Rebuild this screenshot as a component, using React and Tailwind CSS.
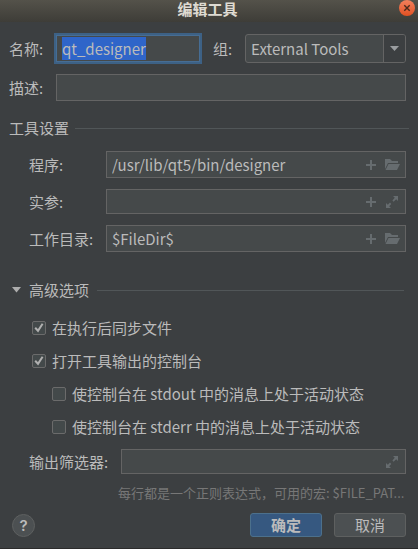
import { useEffect, useRef } from "react";

const field =
  "flex items-center border border-[#646464] bg-[#45494a] focus-within:border-[#466d94] focus-within:outline-2 focus-within:outline-[#3d6185]";
const fieldInput =
  "min-w-0 flex-1 bg-transparent px-[5px] leading-[23px] text-[#bbbbbb] outline-none selection:bg-[#2f65ca]/99 selection:text-[#bbbbbb]";
const iconButton = "flex h-4 w-4 shrink-0 items-center justify-center text-[#666c6f]";

function PlusIcon() {
  return (
    <svg width="16" height="16" viewBox="0 0 16 16" fill="currentColor" aria-hidden="true">
      <path d="M7 3h2v4h4v2H9v4H7V9H3V7h4z" />
    </svg>
  );
}

function FolderIcon() {
  return (
    <svg width="16" height="16" viewBox="0 0 16 16" fill="currentColor" aria-hidden="true">
      <path d="M1 12V2h5l2 2h6v2H4z" />
      <path d="M4.5 7H16l-3 6H1.5z" />
    </svg>
  );
}

function ExpandIcon() {
  return (
    <svg width="16" height="16" viewBox="0 0 16 16" fill="currentColor" aria-hidden="true">
      <path d="M9 2h5v5l-1.8-1.8-2.6 2.6-1.2-1.2 2.4-2.8z" />
      <path d="M2 9l1.8 1.8 2.2-2.2 1.3 1.3-2.1 2.3L7 14H2z" />
    </svg>
  );
}

function Heading({ children }) {
  return (
    <>
      <h2 className="leading-[22px]">{children}</h2>
      <div className="h-px flex-1 bg-[#515658]" />
    </>
  );
}

function ToolRow({ id, label, value, height, expand }) {
  return (
    <div className="flex items-center">
      <label htmlFor={id} className="w-[77px] shrink-0">
        {label}
      </label>
      <div className={`${field} ${height} min-w-0 flex-1 pr-[5px]`}>
        <input id={id} defaultValue={value} className={fieldInput} />
        <button type="button" aria-label="+" className={`${iconButton} mr-[5px]`}>
          <PlusIcon />
        </button>
        <button type="button" aria-label="..." className={iconButton}>
          {expand ? <ExpandIcon /> : <FolderIcon />}
        </button>
      </div>
    </div>
  );
}

function Check({ label, checked }) {
  return (
    <label className="flex h-[22px] items-center gap-[6px]">
      <span className="grid h-[14px] w-[14px] shrink-0">
        <input
          type="checkbox"
          defaultChecked={checked}
          className="peer col-start-1 row-start-1 h-[14px] w-[14px] appearance-none rounded-[2px] border border-[#6b6b6b] bg-[#43494a]"
        />
        <svg
          viewBox="0 0 14 14"
          className="pointer-events-none col-start-1 row-start-1 hidden h-[14px] w-[14px] peer-checked:block"
          fill="none"
          stroke="#b0b0b0"
          strokeWidth="2"
          aria-hidden="true"
        >
          <path d="M3.2 6.8L6 9.8L10.6 2.8" />
        </svg>
      </span>
      <span>{label}</span>
    </label>
  );
}

export default function App() {
  const nameRef = useRef(null);

  useEffect(() => {
    nameRef.current.focus();
    nameRef.current.select();
  }, []);

  return (
    <div className="flex min-h-screen flex-col border-b border-[#2b2b2b] bg-[#3c3f41] font-['Noto_Sans_CJK_SC',sans-serif] text-[15px] leading-[22px] text-[#bbbbbb]">
      <header className="grid h-[22px] grid-cols-[1fr_auto_1fr] items-center bg-linear-to-b from-[#54524a] to-[#3e3d38] pr-[3px]">
        <h1 className="col-start-2 h-[22px] font-bold leading-[18px] text-[#dfdbd2]">编辑工具</h1>
        <button
          type="button"
          aria-label="关闭"
          className="mb-[6px] flex h-4 w-4 items-center justify-center justify-self-end rounded-full bg-linear-to-b from-[#f2805c] to-[#e2501f]"
        >
          <svg width="16" height="16" viewBox="0 0 16 16" fill="none" stroke="#4a2a1c" strokeWidth="1.4" aria-hidden="true">
            <path d="M5.3 5.3l5.4 5.4M10.7 5.3l-5.4 5.4" />
          </svg>
        </button>
      </header>

      <form className="flex flex-1 flex-col" onSubmit={(e) => e.preventDefault()}>
        <div className="mt-3 flex items-center pl-[9px] pr-3">
          <label htmlFor="name" className="w-[47px] shrink-0">
            名称:
          </label>
          <div className={`${field} h-[27px] min-w-0 flex-[144]`}>
            <input id="name" ref={nameRef} defaultValue="qt_designer" className={fieldInput} />
          </div>
          <label htmlFor="group" className="ml-[13px] w-8 shrink-0">
            组:
          </label>
          <div className="grid h-[29px] min-w-0 flex-[161] grid-cols-[1fr_22px] overflow-hidden rounded-[3px] border border-[#646464] bg-[#45494a]">
            <select
              id="group"
              className="col-span-2 col-start-1 row-start-1 min-w-0 appearance-none bg-transparent pl-[5px] pr-6 outline-none"
            >
              <option>External Tools</option>
            </select>
            <span className="pointer-events-none col-start-2 row-start-1 flex items-center justify-center border-l border-[#646464] bg-[#3c3f41]">
              <svg width="9" height="5" viewBox="0 0 9 5" fill="#9a9da0" aria-hidden="true">
                <path d="M0 0h9L4.5 5z" />
              </svg>
            </span>
          </div>
        </div>

        <div className="mt-[11px] flex items-center pl-[9px] pr-3">
          <label htmlFor="description" className="w-[47px] shrink-0">
            描述:
          </label>
          <div className={`${field} h-[27px] min-w-0 flex-1`}>
            <input id="description" className={fieldInput} />
          </div>
        </div>

        <div className="mt-4 flex items-center gap-[6px] pl-[9px] pr-[9px]">
          <Heading>工具设置</Heading>
        </div>

        <div className="mt-3 flex flex-col gap-[11px] pl-[29px] pr-3">
          <ToolRow id="program" label="程序:" value="/usr/lib/qt5/bin/designer" height="h-[27px]" />
          <ToolRow id="arguments" label="实参:" value="" height="h-[25px]" expand />
          <ToolRow id="directory" label="工作目录:" value="$FileDir$" height="h-[27px]" />
        </div>

        <div className="mt-[27px] flex items-center pl-3 pr-[14px]">
          <button type="button" aria-label="高级选项" className="mr-2 flex w-[9px] shrink-0 items-center">
            <svg width="9" height="6" viewBox="0 0 9 6" fill="#adadad" aria-hidden="true">
              <path d="M0 0h9L4.5 5.5z" />
            </svg>
          </button>
          <div className="flex flex-1 items-center gap-2">
            <Heading>高级选项</Heading>
          </div>
        </div>

        <div className="mt-4 flex flex-col gap-[11px] pl-8">
          <Check label="在执行后同步文件" checked />
          <Check label="打开工具输出的控制台" checked />
          <div className="flex flex-col gap-[11px] pl-5">
            <Check label="使控制台在 stdout 中的消息上处于活动状态" />
            <Check label="使控制台在 stderr 中的消息上处于活动状态" />
          </div>
        </div>

        <div className="mt-[11px] flex items-center pl-[29px] pr-3">
          <label htmlFor="filters" className="w-[92px] shrink-0">
            输出筛选器:
          </label>
          <div className={`${field} h-[25px] min-w-0 flex-1 pr-[5px]`}>
            <input id="filters" className={fieldInput} />
            <button type="button" aria-label="..." className={iconButton}>
              <ExpandIcon />
            </button>
          </div>
        </div>
        <p className="mt-[9px] whitespace-nowrap pl-[118px] text-[13px] leading-5 text-[#777777]">
          每行都是一个正则表达式，可用的宏: $FILE_PAT...
        </p>

        <footer className="mt-[10px] flex items-center gap-3 pl-3 pr-3">
          <button
            type="button"
            className="mr-auto h-[23px] w-[23px] rounded-full border border-[#5e6060] bg-[#4c5052] font-[Inter,sans-serif] font-semibold leading-[21px]"
          >
            ?
          </button>
          <button type="submit" className="h-6 w-[72px] rounded-[3px] border border-[#4c708c] bg-[#365880] font-bold">
            确定
          </button>
          <button type="button" className="h-6 w-[72px] rounded-[3px] border border-[#5e6060] bg-[#4c5052]">
            取消
          </button>
        </footer>
      </form>
    </div>
  );
}
